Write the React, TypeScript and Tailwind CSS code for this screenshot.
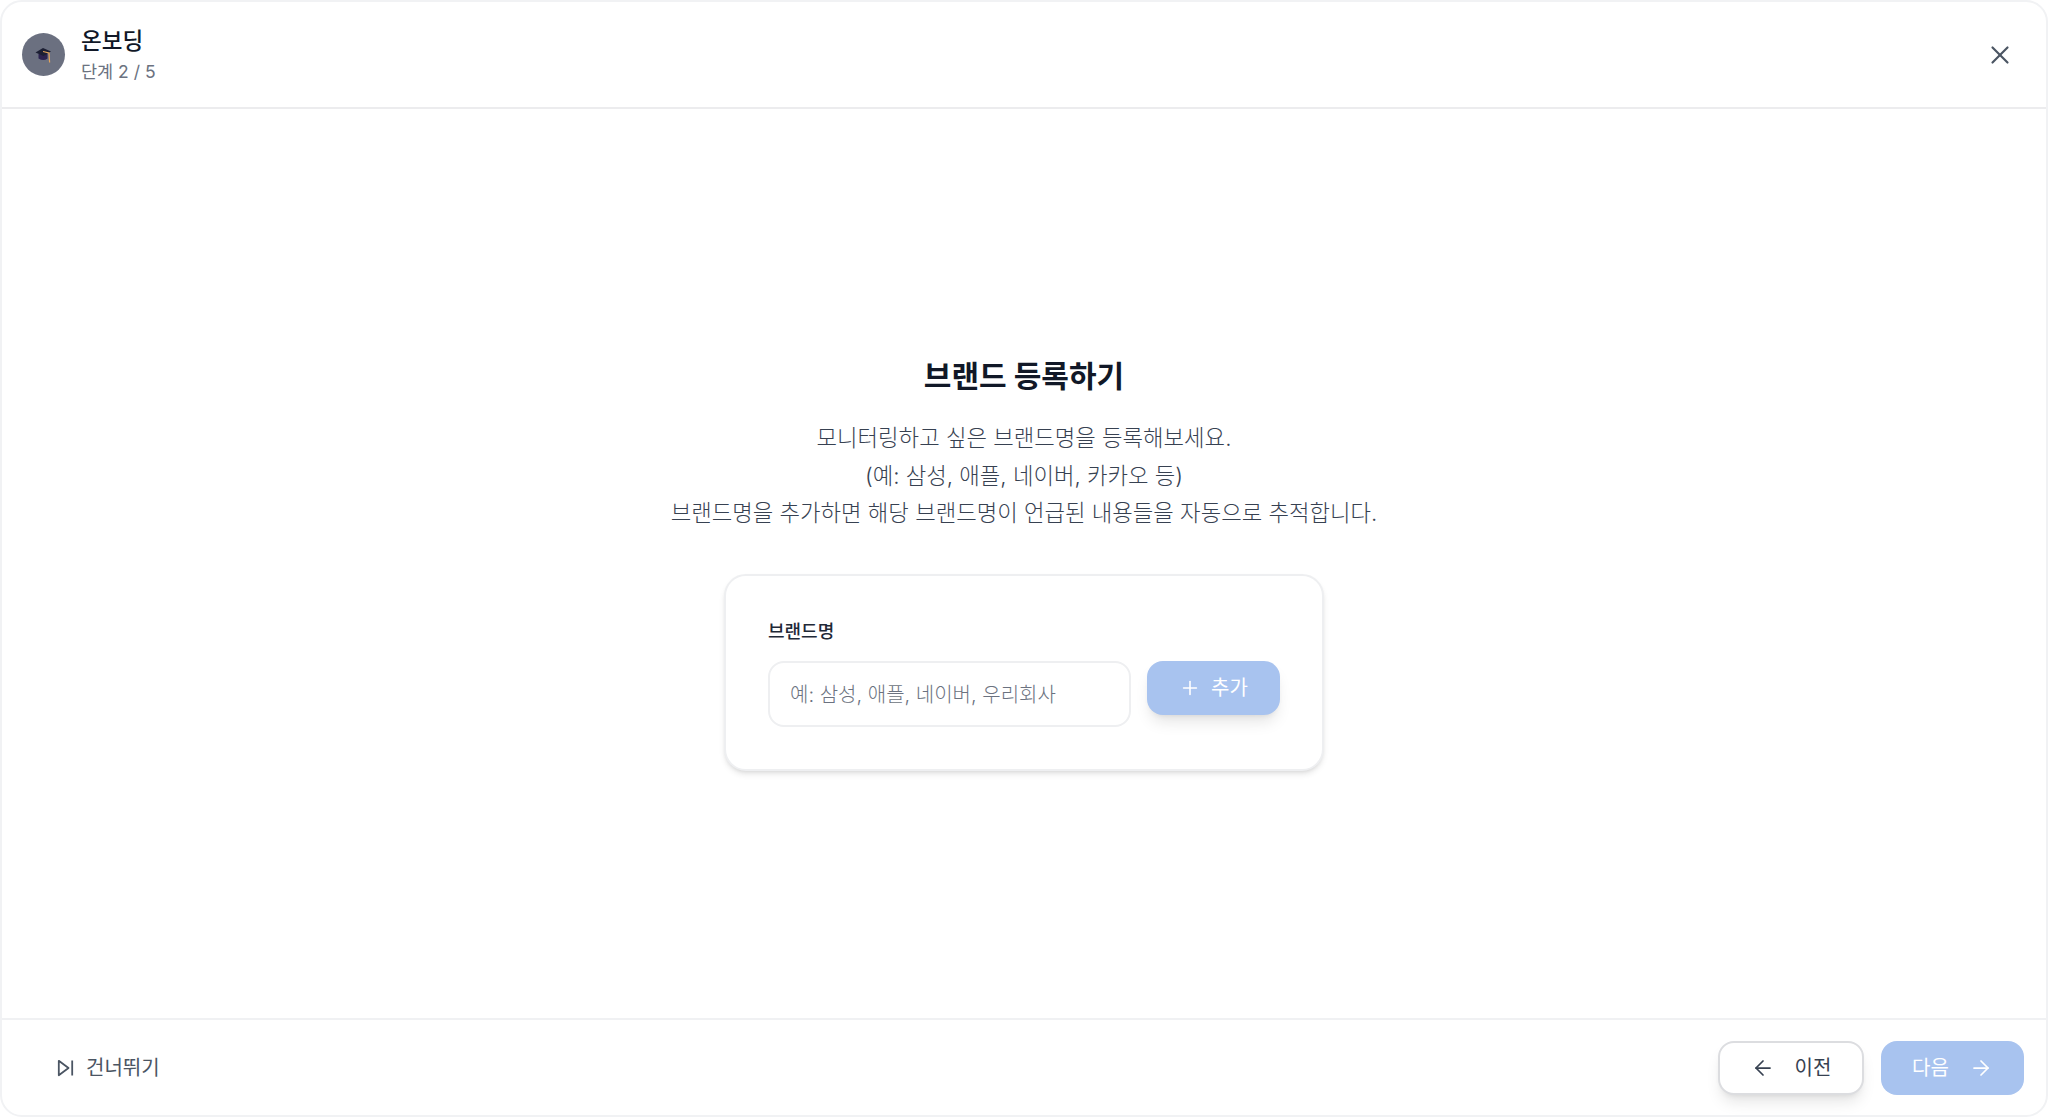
import { ArrowLeft, ArrowRight, Plus, X } from 'lucide-react';

const font = { fontFamily: '"Inter", "Noto Sans CJK KR", sans-serif' };

// graduation cap, the emoji is not available as a font here
const CapIcon = () => (
  <svg width="18" height="18" viewBox="0 0 18 18">
    <path d="M3.5 8 L3.5 12.5 Q8.5 15.5 12.5 12.5 L12.5 8 Z" fill="#2c2350" />
    <path d="M0.5 6.5 L8 2 L16 5.5 L8.5 10 Z" fill="#1c1f33" />
    <path d="M8 5.5 L14 7 L14.6 16.5" fill="none" stroke="#e3a45c" strokeWidth="1.2" />
  </svg>
);

const SkipIcon = () => (
  <svg width="20" height="20" viewBox="0 0 20 20" fill="none" stroke="currentColor" strokeWidth="1.8">
    <path d="M3.8 2.8 L13.5 10 L3.8 17.2 Z" strokeLinejoin="round" />
    <path d="M17.2 2.5 L17.2 17.5" />
  </svg>
);

export default function App() {
  return (
    <div style={font} className="h-screen w-full bg-white flex flex-col rounded-[22px] border-2 border-[#f1f2f4] overflow-hidden">
      <header className="h-[107px] shrink-0 border-b-2 border-[#ececee] flex items-center justify-between pl-[20px] pr-[31px]">
        <div className="flex items-center gap-[16px]">
          <div className="w-[43px] h-[43px] rounded-full bg-[#6b7080] flex items-center justify-center">
            <CapIcon />
          </div>
          <div className="flex flex-col pt-[2px]">
            <div className="text-[22.5px] leading-[32px] font-medium text-[#111827]">온보딩</div>
            <div className="mt-[1px] text-[17.5px] leading-[28px] text-[#6b7280]">단계 2 / 5</div>
          </div>
        </div>
        <X size={30} strokeWidth={1.75} className="text-[#4b5563]" />
      </header>

      <main className="flex-1 flex flex-col items-center justify-center">
        <h1 className="text-[30px] leading-[40px] font-bold text-[#111827]">브랜드 등록하기</h1>
        <p className="mt-[23px] text-[22.3px] leading-[37.5px] font-light text-[#374151] text-center">
          모니터링하고 싶은 브랜드명을 등록해보세요.
          <br />
          (예: 삼성, 애플, 네이버, 카카오 등)
          <br />
          브랜드명을 추가하면 해당 브랜드명이 언급된 내용들을 자동으로 추적합니다.
        </p>
        <div className="mt-[42px] w-[600px] bg-white rounded-[22px] border-2 border-[#eeeff1] shadow-md px-[42px] py-[42px]">
          <div className="text-[18px] leading-[28px] font-medium text-[#1f2937]">브랜드명</div>
          <div className="mt-[15px] flex items-start gap-[16px]">
            <input
              readOnly
              placeholder="예: 삼성, 애플, 네이버, 우리회사"
              className="flex-1 min-w-0 h-[66px] rounded-[16px] border-2 border-[#eeeff1] px-[20px] pt-[2px] text-[20px] font-light text-[#111827] placeholder:text-[#6b7280] outline-none"
            />
            <button className="w-[133px] h-[54px] rounded-[16px] bg-[#a8c3ef] text-white text-[20px] flex items-center justify-center gap-[10px] shadow-lg">
              <Plus size={22} strokeWidth={1.75} />
              추가
            </button>
          </div>
        </div>
      </main>

      <footer className="h-[97px] shrink-0 border-t-2 border-[#f0f1f3] flex items-center justify-between pl-[53px] pr-[22px]">
        <button className="flex items-center gap-[11px] text-[20px] text-[#4b5563]">
          <SkipIcon />
          건너뛰기
        </button>
        <div className="flex items-center gap-[17px]">
          <button className="w-[146px] h-[54px] rounded-[16px] bg-white border-2 border-[#dcdde0] text-[#374151] text-[20px] flex items-center justify-center gap-[20px] shadow-lg">
            <ArrowLeft size={24} strokeWidth={1.75} />
            이전
          </button>
          <button className="w-[143px] h-[54px] rounded-[16px] bg-[#a8c3ef] text-white text-[20px] flex items-center justify-center gap-[20px]">
            다음
            <ArrowRight size={24} strokeWidth={1.75} />
          </button>
        </div>
      </footer>
    </div>
  );
}
